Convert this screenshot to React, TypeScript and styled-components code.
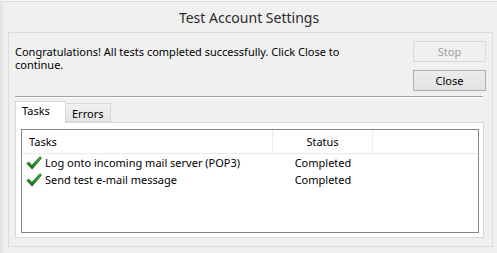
import React from 'react';
import styled, { createGlobalStyle } from 'styled-components';

const GlobalStyle = createGlobalStyle`
  html, body {
    margin: 0;
    padding: 0;
    background: #f0f0f0;
  }
  * {
    box-sizing: border-box;
  }
`;

const Window = styled.div`
  width: 497px;
  height: 253px;
  display: flex;
  flex-direction: column;
  background: #f0f0f0;
  border-left: 3px solid #e4e4e4;
  border-top: 1px solid #f7f7f7;
  box-shadow: inset 0 1px 0 #dcdcdc;
  font-family: 'Noto Sans', 'Open Sans', sans-serif;
  font-size: 11px;
  color: #000;
  overflow: hidden;
`;

const TitleBar = styled.div`
  height: 31px;
  display: flex;
  align-items: center;
  justify-content: center;
  padding-right: 2px;
  padding-top: 1px;
  font-size: 14px;
  color: #2b2b2b;
`;

const Panel = styled.div`
  flex: 1;
  margin: 0 4px 6px 5px;
  border: 1px solid #dcdcdc;
  display: flex;
  flex-direction: column;
  padding: 8px 6px 8px 6px;
`;

const TopRow = styled.div`
  display: flex;
  justify-content: space-between;
`;

const Message = styled.p`
  margin: 0;
  padding-top: 4px;
  width: 350px;
  line-height: 13px;
`;

const ButtonColumn = styled.div`
  display: flex;
  flex-direction: column;
  gap: 8px;
`;

const Button = styled.button<{ disabled?: boolean }>`
  width: 73px;
  height: 21px;
  padding: 0;
  font-family: inherit;
  font-size: 11px;
  color: ${(p) => (p.disabled ? '#a0a0a0' : '#000')};
  background: ${(p) => (p.disabled ? '#f0f0f0' : 'linear-gradient(#ececec, #e2e2e2)')};
  border: 1px solid ${(p) => (p.disabled ? '#d9d9d9' : '#adadad')};
  border-radius: 0;
`;

const Separator = styled.div`
  margin: 5px 3px 0 0;
  height: 2px;
  border-top: 1px solid #a0a0a0;
  border-bottom: 1px solid #ffffff;
`;

const TabStrip = styled.div`
  margin-top: 3px;
  display: flex;
  align-items: flex-end;
  height: 21px;
  margin-right: 2px;
  position: relative;
  z-index: 1;
`;

const Tab = styled.div<{ $active?: boolean }>`
  height: ${(p) => (p.$active ? '22px' : '19px')};
  margin-bottom: ${(p) => (p.$active ? '-1px' : '0')};
  padding: ${(p) => (p.$active ? '1px 0 0 6px' : '2px 0 0 6px')};
  width: ${(p) => (p.$active ? '51px' : '45px')};
  background: ${(p) => (p.$active ? '#ffffff' : 'linear-gradient(#f0f0f0, #e5e5e5)')};
  border: 1px solid #d9d9d9;
  border-bottom: ${(p) => (p.$active ? 'none' : '1px solid #d9d9d9')};
  border-left: ${(p) => (p.$active ? '1px solid #d9d9d9' : 'none')};
  line-height: 15px;
`;

const TabPanel = styled.div`
  flex: 1;
  margin-right: 2px;
  background: #ffffff;
  border: 1px solid #d9d9d9;
  padding: 6px 4px 4px 5px;
  display: flex;
`;

const ListView = styled.div`
  flex: 1;
  border: 1px solid #828790;
  background: #ffffff;
  display: flex;
  flex-direction: column;
`;

const HeaderRow = styled.div`
  display: flex;
  height: 24px;
  border-bottom: 1px solid #eaeaea;
`;

const HeaderCell = styled.div<{ $width: number; $center?: boolean }>`
  width: ${(p) => p.$width}px;
  display: flex;
  align-items: center;
  justify-content: ${(p) => (p.$center ? 'center' : 'flex-start')};
  padding-left: ${(p) => (p.$center ? '0' : '7px')};
  border-right: 1px solid #e5edf5;
  padding-bottom: 1px;
`;

const Row = styled.div`
  display: flex;
  height: 17px;
  align-items: center;
`;

const NameCell = styled.div`
  width: 251px;
  display: flex;
  align-items: center;
  gap: 3px;
  padding-left: 4px;
`;

const StatusCell = styled.div`
  width: 100px;
  text-align: center;
`;

const CheckIcon = () => (
  <svg width="16" height="16" viewBox="0 0 16 16">
    <defs>
      <linearGradient id="chk" x1="0" y1="0" x2="0" y2="1">
        <stop offset="0" stopColor="#3fae3f" />
        <stop offset="1" stopColor="#137013" />
      </linearGradient>
    </defs>
    <path
      d="M0.8 8.6 L2.8 6.9 L5.9 10.2 L14 1.6 L15.6 3.1 L6.1 14.2 Z"
      fill="url(#chk)"
      stroke="#0d5a0d"
      strokeWidth="0.6"
      strokeLinejoin="round"
    />
  </svg>
);

const tasks = [
  { name: 'Log onto incoming mail server (POP3)', status: 'Completed' },
  { name: 'Send test e-mail message', status: 'Completed' },
];

export default function App() {
  return (
    <>
      <GlobalStyle />
      <Window>
        <TitleBar>Test Account Settings</TitleBar>
        <Panel>
          <TopRow>
            <Message>
              Congratulations! All tests completed successfully. Click Close to continue.
            </Message>
            <ButtonColumn>
              <Button disabled>Stop</Button>
              <Button>Close</Button>
            </ButtonColumn>
          </TopRow>
          <Separator />
          <TabStrip>
            <Tab $active>Tasks</Tab>
            <Tab>Errors</Tab>
          </TabStrip>
          <TabPanel>
            <ListView>
              <HeaderRow>
                <HeaderCell $width={251}>Tasks</HeaderCell>
                <HeaderCell $width={100} $center>
                  Status
                </HeaderCell>
              </HeaderRow>
              {tasks.map((t) => (
                <Row key={t.name}>
                  <NameCell>
                    <CheckIcon />
                    {t.name}
                  </NameCell>
                  <StatusCell>{t.status}</StatusCell>
                </Row>
              ))}
            </ListView>
          </TabPanel>
        </Panel>
      </Window>
    </>
  );
}
